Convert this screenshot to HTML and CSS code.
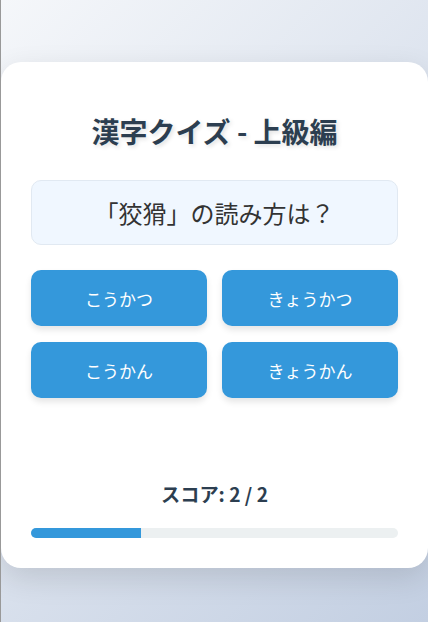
FILE: index.html
```html
<!DOCTYPE html>
<html lang="ja">
<head>
    <meta charset="UTF-8">
    <meta name="viewport" content="width=device-width, initial-scale=1.0">
    <title>漢字クイズ</title>
    <link rel="stylesheet" href="styles.css">
</head>
<body>

<div id="quiz-container">
    <h1>漢字クイズ - 上級編</h1>
    <div id="question">「狡猾」の読み方は？</div>
    <div id="options">
        <button class="option">こうかつ</button>
        <button class="option">きょうかつ</button>
        <button class="option">こうかん</button>
        <button class="option">きょうかん</button>
    </div>
    <div id="feedback"></div>
    <div id="score">スコア: 2 / 2</div>
    <div id="progress">
        <div id="progress-bar" style="width: 30%;"></div>
    </div>
</div>

</body>
</html>
```
FILE: styles.css
```css
html {
    height: 100%;
}
body {
    font-family: "Noto Sans CJK JP", "Noto Sans", sans-serif;
    margin: 0;
    min-height: 100%;
    border-left: 1px solid #999;
    background: linear-gradient(135deg, #f5f7fa 0%, #c3cfe2 100%);
    padding-top: 62px;
    box-sizing: border-box;
}
#quiz-container {
    width: 427px;
    box-sizing: border-box;
    padding: 30px;
    background: #fff;
    border-radius: 20px;
    box-shadow: 0 10px 30px rgba(0, 0, 0, 0.12);
}
h1 {
    margin: 19px 0 29px;
    font-size: 28px;
    font-weight: bold;
    text-align: center;
    color: #2c3e50;
    text-shadow: 2px 2px 4px rgba(0, 0, 0, 0.12);
}
#question {
    padding: 14px 15px;
    font-size: 24px;
    text-align: center;
    color: #333;
    background: #f0f7ff;
    border: 1px solid #e1e9f2;
    border-radius: 10px;
}
#options {
    display: grid;
    grid-template-columns: 1fr 1fr;
    gap: 16px 15px;
    margin-top: 25px;
}
#options .option {
    height: 56px;
    font-family: inherit;
    font-size: 17px;
    color: #fff;
    background: #3498db;
    border: none;
    border-radius: 10px;
    box-shadow: 0 4px 6px rgba(0, 0, 0, 0.1);
    cursor: pointer;
}
#options .option:hover {
    background: #2980b9;
}
#feedback {
    height: 82px;
}
#score {
    font-size: 19.2px;
    font-weight: bold;
    text-align: center;
    color: #2c3e50;
}
#progress {
    height: 10px;
    margin-top: 20px;
    background: #ecf0f1;
    border-radius: 5px;
    overflow: hidden;
}
#progress-bar {
    height: 100%;
    background: #3498db;
}
```
